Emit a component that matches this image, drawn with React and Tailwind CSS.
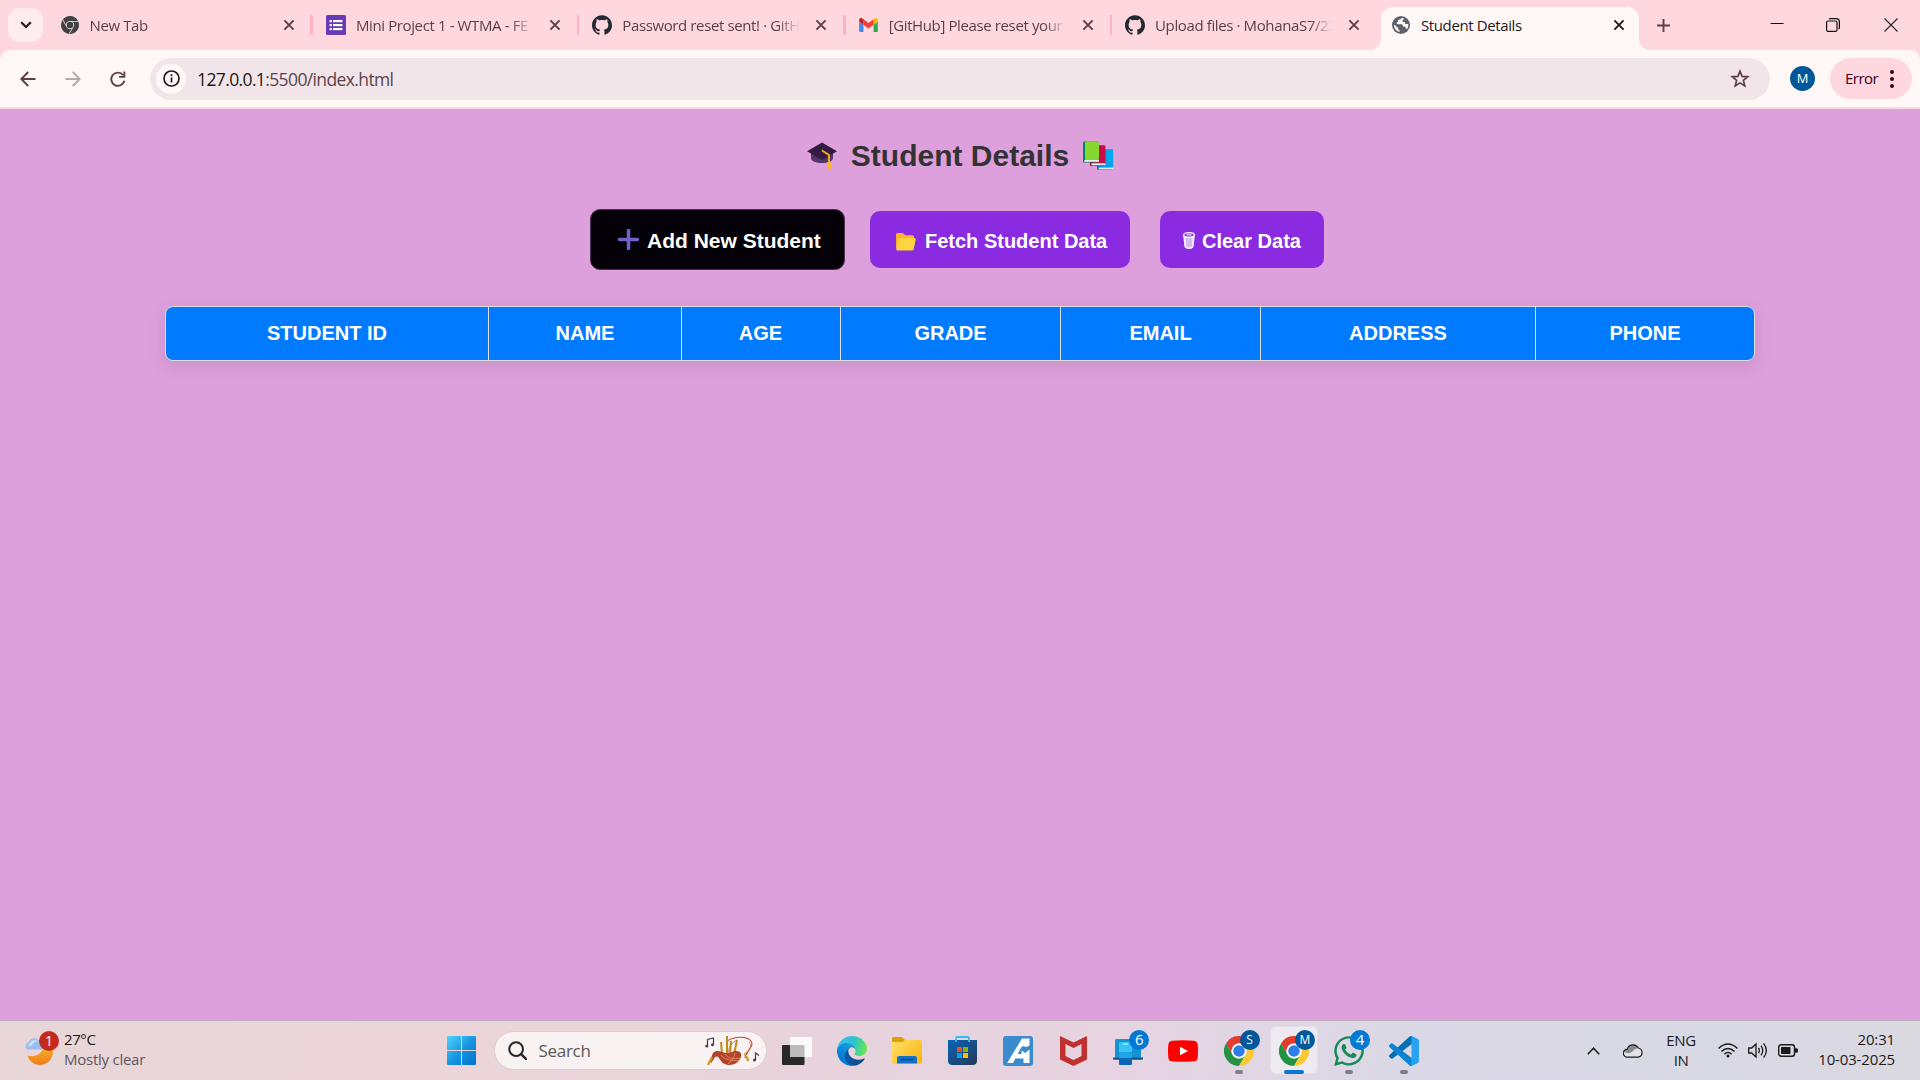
import React from "react";
import { SiGithub, SiGooglechrome } from "react-icons/si";
import { FaWhatsapp } from "react-icons/fa";

function CloseX({ className = "" }) {
  return (
    <svg viewBox="0 0 12 12" className={`size-3 shrink-0 ${className}`} fill="none" stroke="currentColor" strokeWidth="1.9">
      <path d="M1.4 1.4 10.6 10.6M10.6 1.4 1.4 10.6" />
    </svg>
  );
}

function FormsIcon() {
  return (
    <svg viewBox="0 0 20 20" className="size-5">
      <rect width="20" height="20" rx="1.5" fill="#673ab7" />
      <g fill="#fff">
        <rect x="3.6" y="5" width="2.2" height="2.2" />
        <rect x="7" y="5" width="9.4" height="2.2" />
        <rect x="3.6" y="9" width="2.2" height="2.2" />
        <rect x="7" y="9" width="9.4" height="2.2" />
        <rect x="3.6" y="13" width="2.2" height="2.2" />
        <rect x="7" y="13" width="9.4" height="2.2" />
      </g>
    </svg>
  );
}

function GmailIcon() {
  return (
    <svg viewBox="52 42 88 66" className="h-[14px] w-[19px]">
      <path fill="#4285f4" d="M58 108h14V74L52 59v43c0 3.32 2.69 6 6 6" />
      <path fill="#34a853" d="M120 108h14c3.32 0 6-2.69 6-6V59l-20 15" />
      <path fill="#fbbc04" d="M120 48v26l20-15v-8c0-7.42-8.47-11.65-14.4-7.2" />
      <path fill="#ea4335" d="M72 74V48l24 18 24-18v26L96 92" />
      <path fill="#c5221f" d="M52 51v8l20 15V48l-5.6-4.2c-5.94-4.45-14.4-.22-14.4 7.2" />
    </svg>
  );
}

function GlobeIcon() {
  return (
    <svg viewBox="0 0 18 18" className="size-[18px]">
      <circle cx="9" cy="9" r="9" fill="#5f6368" />
      <path fill="#fff8f7" d="M10.2 1.8c-.8.3-1.5 1-1.7 1.8H7.3c-.7 0-1.2.6-1.2 1.3v1.2H4.8v1.3c0 .5.4.8.9.8h3.8c.8 0 1.2.6 1.2 1.2v1.1h1.5c.9 0 1.4.8 1.5 1.6l1 1.2c1-1 1.6-2.5 1.6-4.1l-.1-1.1h-2.2c-.7 0-1.1-.4-1.1-1V5.9h-1.5c-.6 0-1-.4-1-1 0-1.2 1.5-1 1.5-2.2z" />
      <path fill="#fff8f7" d="M1.9 8.5 6.2 12v.8c0 .8.6 1.4 1.4 1.4v1.9A7.2 7.2 0 0 1 1.9 8.5z" />
    </svg>
  );
}

function Tab({ icon, title, last }) {
  return (
    <div className="flex h-full w-[266.4px] shrink-0 items-center">
      <div className="ml-[14px] flex w-5 items-center justify-center">{icon}</div>
      <div className="ml-[10px] w-[178px] overflow-hidden whitespace-nowrap text-[15px] leading-5 tracking-[-0.38px] text-[#5c3f44] [mask-image:linear-gradient(to_right,#000_155px,transparent_178px)]">
        {title}
      </div>
      <CloseX className="ml-[15px] text-[#5c3f44]" />
      {!last && <div className="ml-auto h-5 w-[2.5px] translate-x-px rounded-full bg-[#ffb1bf]" />}
    </div>
  );
}

function TabStrip() {
  return (
    <div className="flex h-[50px] items-center bg-[#ffd8df]">
      <div className="ml-2 flex h-[34px] w-[35px] shrink-0 items-center justify-center rounded-xl bg-[#ffecef]">
        <svg viewBox="0 0 12 8" className="h-2 w-3" fill="none" stroke="#24191b" strokeWidth="2.2">
          <path d="M1.2 1.2 6 6l4.8-4.8" />
        </svg>
      </div>
      <div className="ml-[2.5px] flex h-full">
        <Tab icon={<SiGooglechrome className="size-[18px] text-[#3f4346]" />} title="New Tab" />
        <Tab icon={<FormsIcon />} title="Mini Project 1 - WTMA - FE" />
        <Tab icon={<SiGithub className="size-5 text-[#24292f]" />} title="Password reset sent! · GitH" />
        <Tab icon={<GmailIcon />} title="[GitHub] Please reset your p" />
        <Tab icon={<SiGithub className="size-5 text-[#24292f]" />} title="Upload files · MohanaS7/23" last />
      </div>
      <div className="relative ml-[3.5px] flex h-[43px] w-[258px] shrink-0 items-center self-end rounded-t-xl bg-[#fff8f7]">
        <div className="absolute bottom-0 -left-3 size-3 bg-[radial-gradient(circle_at_0_0,transparent_12px,#fff8f7_12.5px)]" />
        <div className="absolute bottom-0 -right-3 size-3 bg-[radial-gradient(circle_at_100%_0,transparent_12px,#fff8f7_12.5px)]" />
        <div className="mb-[7px] ml-[11px] flex items-center">
          <GlobeIcon />
          <div className="ml-[11px] w-[192px] text-[15px] leading-5 tracking-[-0.38px] text-[#24191b]">Student Details</div>
          <CloseX className="text-[#24191b]" />
        </div>
      </div>
      <svg viewBox="0 0 13 13" className="ml-[18px] size-[13px]" fill="none" stroke="#5c3f44" strokeWidth="1.9">
        <path d="M6.5 0v13M0 6.5h13" />
      </svg>
      <svg viewBox="0 0 14 14" className="ml-[100px] size-[14px]" fill="none" stroke="#111">
        <path d="M.5 5.5h13" />
      </svg>
      <svg viewBox="0 0 14 14" className="ml-[42px] size-[14px]" fill="none" stroke="#111" strokeWidth="1.2">
        <rect x=".6" y="3" width="10.4" height="10.4" rx="1.5" />
        <path d="M3 1.2Q3.5.6 4.500.6h5.500q3.400 0 3.400 3.400v5.500q0 1-.8 1.500" />
      </svg>
      <svg viewBox="0 0 14 14" className="ml-[44px] size-[14px]" fill="none" stroke="#222" strokeWidth="1.1">
        <path d="m.5.5 13 13M13.500.5l-13 13" />
      </svg>
    </div>
  );
}

function Toolbar() {
  return (
    <div className="h-[59px] bg-[#ffd8df]">
      <div className="flex h-[59px] items-center rounded-t-[10px] border-b-2 border-[#f3dde0] bg-[#fff8f7]">
        <svg viewBox="0 0 16 16" className="ml-5 size-4" fill="none" stroke="#5c3f44" strokeWidth="1.9">
          <path d="M15.500 8H1.500M8.200 1 1.300 8l6.900 7" />
        </svg>
        <svg viewBox="0 0 16 16" className="ml-[29px] size-4" fill="none" stroke="#b8a6a8" strokeWidth="1.9">
          <path d="M.5 8h14M7.800 1l6.900 7-6.900 7" />
        </svg>
        <svg viewBox="0 0 16 16" className="ml-[29px] size-4" fill="none" stroke="#5c3f44" strokeWidth="1.9">
          <path d="M13.200 4.300A6.600 6.600 0 1 0 14.300 9.800" />
          <path d="M14.400.6v5.300H9.100" />
        </svg>
        <div className="ml-6 flex h-[42px] w-[1620px] items-center rounded-full bg-[#f2e5e9]">
          <div className="ml-[6px] flex size-[30px] items-center justify-center rounded-full bg-[#fff8f7]">
            <svg viewBox="0 0 17 17" className="size-[17px]" fill="none" stroke="#24191b" strokeWidth="1.7">
              <circle cx="8.500" cy="8.500" r="7.500" />
              <path d="M8.500 7.500v5M8.500 4.300v1.900" />
            </svg>
          </div>
          <div className="mt-px ml-[11px] text-[17.5px] leading-6 tracking-[-0.62px] text-[#5c4348]">
            <span className="text-[#1f1517]">127.0.0.1</span>:5500/index.html
          </div>
          <svg viewBox="0 0 20 20" className="mr-[20px] ml-auto size-5" fill="none" stroke="#5c3f44" strokeWidth="1.7">
            <path d="m10 2.200 2.100 5.200 5.600.4-4.300 3.600 1.400 5.500L10 13.900l-4.800 3 1.400-5.500-4.300-3.600 5.600-.4z" />
          </svg>
        </div>
        <div className="ml-5 flex size-[25px] items-center justify-center rounded-full bg-[#01579b] text-[13px] text-white">M</div>
        <div className="ml-[15px] flex h-[41px] w-[82px] items-center rounded-full bg-[#ffd8df] pl-[15px] text-[15px] text-[#3f0018]">
          <span className="w-[32px] tracking-[-0.5px]">Error</span>
          <svg viewBox="0 0 4 18" className="ml-[13px] h-[18px] w-1" fill="#3f0018">
            <circle cx="2" cy="2" r="2" />
            <circle cx="2" cy="9" r="2" />
            <circle cx="2" cy="16" r="2" />
          </svg>
        </div>
      </div>
    </div>
  );
}

function CapIcon() {
  return (
    <svg viewBox="0 0 30 28" className="h-7 w-[30px]">
      <path d="M4 10v6c0 3 5 5 11 5s11-2 11-5v-6z" fill="#533566" />
      <path d="M15 .5 30 9.200 15 18 0 9.200z" fill="#321b41" />
      <path d="m15 8.500 7 4.500v11" fill="none" stroke="#f9a825" strokeWidth="1.9" />
      <path d="M20.300 20h3.400l.4 7.500h-4.200z" fill="#ffb02e" />
    </svg>
  );
}

function BooksIcon() {
  return (
    <svg viewBox="0 0 30 30" className="size-[30px]">
      <rect x="14" y="8.500" width="16" height="20.500" rx="1.200" fill="#0074ba" />
      <rect x="16" y="8.500" width="14" height="18" rx="1" fill="#00a6ed" />
      <path d="M15.500 26.500H30v2H15.500z" fill="#e5e5ef" />
      <rect x="7" y="4.500" width="15" height="20.500" rx="1.200" fill="#990838" />
      <rect x="9" y="4.500" width="13.500" height="18" rx="1" fill="#ca0b4a" />
      <path d="M8.500 22.300h13.800v2H8.500z" fill="#f3eef8" />
      <rect x="0" y=".5" width="15.500" height="21" rx="1.200" fill="#008463" />
      <rect x="2" y=".5" width="14" height="18.500" rx="1" fill="#86d72f" />
      <path d="M1.500 19H16v1.800H1.500z" fill="#f3eef8" />
    </svg>
  );
}

const columns = [
  ["STUDENT ID", "w-[323px]"],
  ["NAME", "w-[193px]"],
  ["AGE", "w-[159px] pr-px"],
  ["GRADE", "w-[220px]"],
  ["EMAIL", "w-[200px]"],
  ["ADDRESS", "w-[275px]"],
  ["PHONE", "w-[218px]"],
];

function StudentPage() {
  return (
    <main className="flex h-[911px] flex-col items-center bg-[#dda0dd] font-['Liberation_Sans',Arial,sans-serif] font-bold">
      <h1 className="mt-[28px] flex h-[36px] items-center text-[30px] text-[#333]">
        <span className="mt-[2px]"><CapIcon /></span>
        <span className="mr-[14px] ml-[14px]">Student Details</span>
        <span className="mt-[2px]"><BooksIcon /></span>
      </h1>
      <div className="mt-[36px] mr-[6px] flex h-[61px] items-center text-[20px] text-white">
        <button className="flex h-[61px] w-[255px] items-center rounded-[10px] border border-[#4a3350] bg-[#040108] pl-[27px] text-[21px]">
          <svg viewBox="0 0 20 20" className="size-[21px]">
            <path d="M10 1.500v17M1.500 10h17" stroke="#7660c8" strokeWidth="3.400" strokeLinecap="round" />
          </svg>
          <span className="mt-[3px] ml-[8px] whitespace-nowrap">Add New Student</span>
        </button>
        <button className="ml-[25px] flex h-[57px] w-[260px] items-center rounded-[10px] bg-[#8a2be2] pl-[26px]">
          <svg viewBox="0 0 20 18" className="mt-[5px] h-[18px] w-5">
            <path d="M0 1.500Q0 0 1.500 0H6q1 0 1.500.6L9 2.300h7.500q1.500 0 1.500 1.500V15H0z" fill="#ffb02e" />
            <path d="M4.800 5h13.700q1.500 0 1.200 1.500l-2 9.500q-.3 1.500-1.800 1.500H1.500Q0 17.500.3 16L2.800 6.500Q3.200 5 4.800 5z" fill="#fcd53f" />
          </svg>
          <span className="mt-[3px] ml-[9px] whitespace-nowrap">Fetch Student Data</span>
        </button>
        <button className="ml-[30px] flex h-[57px] w-[164px] items-center rounded-[10px] bg-[#8a2be2] pl-[23px]">
          <svg viewBox="0 0 12 17" className="mt-px h-[17px] w-3" fill="none" stroke="#fff">
            <path d="M.8 4 2 15q.2 1.400 4 1.400t4-1.400l1.200-11z" fill="#e9dcf9" strokeWidth="1" />
            <path d="M4 6.200v8.500M6 6.200v9M8 6.200v8.500" stroke="#a868e8" strokeWidth=".6" />
            <ellipse cx="6" cy="2.900" rx="5.400" ry="2.300" fill="#8a2be2" strokeWidth="1.200" />
            <path d="M3.500 2.800h5" strokeWidth="1" />
          </svg>
          <span className="mt-[3px] ml-[7px] whitespace-nowrap">Clear Data</span>
        </button>
      </div>
      <div className="mt-[36px] flex h-[55px] w-[1590px] overflow-hidden rounded-[8px] border border-[#ddd] bg-[#007bff] text-[20px] text-white shadow-[0_5px_19px_rgba(0,0,0,0.1)]">
        {columns.map(([name, width], i) => (
          <div
            key={name}
            className={`flex shrink-0 items-center justify-center pb-px ${width} ${i < columns.length - 1 ? "border-r border-[#ddd]" : ""}`}
          >
            {name}
          </div>
        ))}
      </div>
    </main>
  );
}

function ChromeLogo() {
  return (
    <svg viewBox="0 0 48 48" className="size-[30px]">
      <path fill="#e33b2e" d="M24 12H44.800A24 24 0 0 0 3.200 12L13.600 30A12 12 0 0 1 24 12z" />
      <path fill="#229342" d="M3.200 12A24 24 0 0 0 24 48L34.400 30A12 12 0 0 1 13.600 30z" />
      <path fill="#fcc934" d="M44.800 12A24 24 0 0 1 24 48L34.400 30A12 12 0 0 0 24 12z" />
      <circle cx="24" cy="24" r="12" fill="#fff" />
      <circle cx="24" cy="24" r="9.300" fill="#2f7de9" />
    </svg>
  );
}

function EdgeLogo() {
  return (
    <svg viewBox="0 0 256 256" className="size-[30px]">
      <defs>
        <linearGradient id="edgeDeep" x1="60" y1="178" x2="237" y2="178" gradientUnits="userSpaceOnUse">
          <stop stopColor="#0c59a4" />
          <stop offset="1" stopColor="#114a8b" />
        </linearGradient>
        <linearGradient id="edgeMid" x1="150" y1="90" x2="40" y2="220" gradientUnits="userSpaceOnUse">
          <stop stopColor="#1b9de2" />
          <stop offset="1" stopColor="#0078d4" />
        </linearGradient>
        <linearGradient id="edgeTop" x1="20" y1="50" x2="250" y2="120" gradientUnits="userSpaceOnUse">
          <stop stopColor="#35c1f1" />
          <stop offset=".5" stopColor="#2fc3cc" />
          <stop offset="1" stopColor="#66eb4b" />
        </linearGradient>
      </defs>
      <path fill="url(#edgeDeep)" d="M231.070 190.540c-3.430 1.800-6.960 3.380-10.600 4.700a101.860 101.860 0 0 1-35.930 6.460c-47.350 0-88.600-32.570-88.600-74.360A31.480 31.480 0 0 1 112.370 100c-42.830 1.800-53.840 46.430-53.840 72.580 0 73.930 68.140 81.430 82.820 81.430 7.910 0 19.840-2.300 27-4.570l1.310-.44a128.340 128.340 0 0 0 66.600-52.800 4 4 0 0 0-5.200-5.660z" />
      <path fill="url(#edgeMid)" d="M105.730 241.420a79.200 79.200 0 0 1-22.740-21.340 80.720 80.720 0 0 1 29.380-120.080c3.120-1.470 8.450-4.130 15.540-4a32.350 32.350 0 0 1 25.690 13 31.880 31.880 0 0 1 6.360 18.660c0-.21 24.460-79.600-80-79.600-43.900 0-80 41.660-80 78.210a130.150 130.150 0 0 0 12.110 56A128 128 0 0 0 168.350 249.400a75.550 75.550 0 0 1-62.630-8z" />
      <path fill="url(#edgeTop)" d="M152.290 148.860c-.81 1.050-3.300 2.500-3.300 5.660 0 2.610 1.700 5.120 4.720 7.230 14.380 10 41.490 8.680 41.560 8.680a59.560 59.560 0 0 0 30.270-8.350A61.380 61.380 0 0 0 256 109.190c.26-22.410-8-37.310-11.340-43.910C223.460 23.840 177.720 0 128 0A128 128 0 0 0 0 126.200c.48-36.540 36.800-66.050 80-66.050 3.500 0 23.460.34 42 10.070 16.340 8.580 24.900 18.940 30.850 29.210 6.180 10.670 7.280 24.150 7.280 29.520 0 5.370-2.740 13.330-7.800 19.900z" />
    </svg>
  );
}

function VsCodeLogo() {
  return (
    <svg viewBox="0 0 100 100" className="size-[30px]">
      <path fill="#0070b3" d="M96.460 10.800L75.860.88c-2.380-1.150-5.230-.66-7.100 1.200L1.300 63.580c-1.820 1.650-1.810 4.510 0 6.160l5.510 5.010c1.480 1.350 3.720 1.450 5.330.23l81.240-61.630C96.100 11.280 100 13.230 100 16.640v-.24c0-2.400-1.370-4.570-3.540-5.600z" />
      <path fill="#0b84d3" d="M96.460 89.200l-20.600 9.920c-2.380 1.150-5.230.66-7.100-1.200L1.300 36.420c-1.820-1.650-1.810-4.510 0-6.160l5.510-5.010c1.480-1.350 3.720-1.450 5.330-.23l81.240 61.630c2.720 2.070 6.620.12 6.620-3.290v.24c0 2.400-1.370 4.570-3.540 5.600z" />
      <path fill="#27a3f2" d="M75.860 99.130c-2.390 1.140-5.240.66-7.110-1.210 2.310 2.300 6.250.67 6.250-2.590V4.670c0-3.260-3.940-4.890-6.250-2.590 1.870-1.870 4.720-2.360 7.110-1.210l20.600 9.910c2.160 1.040 3.540 3.230 3.540 5.630v67.180c0 2.400-1.380 4.590-3.540 5.630l-20.600 9.910z" />
    </svg>
  );
}

function WindowsLogo() {
  return (
    <svg viewBox="0 0 29 29" className="size-[29px]">
      <defs>
        <linearGradient id="win" x1="0" y1="0" x2="29" y2="29" gradientUnits="userSpaceOnUse">
          <stop stopColor="#4fd2fb" />
          <stop offset=".55" stopColor="#1591e0" />
          <stop offset="1" stopColor="#0074cf" />
        </linearGradient>
      </defs>
      <path fill="url(#win)" d="M1 0h13v14H0V1q0-1 1-1zM15 0h13q1 0 1 1v13H15zM0 15h14v14H1q-1 0-1-1zM15 15h14v13q0 1-1 1H15z" />
    </svg>
  );
}

function TaskViewIcon() {
  return (
    <svg viewBox="0 0 30 28" className="h-7 w-[30px]">
      <rect y="8" width="22.500" height="20" rx="1" fill="#292929" />
      <rect x="8" width="22" height="20" rx="1" fill="#fbfbfb" />
      <path d="M8 8h14.500v12H8z" fill="#bcbcbc" />
    </svg>
  );
}

function FolderIcon() {
  return (
    <svg viewBox="0 0 30 27" className="h-[27px] w-[30px]">
      <defs>
        <linearGradient id="fold" x1="0" y1="4" x2="24" y2="27" gradientUnits="userSpaceOnUse">
          <stop stopColor="#ffdf6b" />
          <stop offset="1" stopColor="#fdb813" />
        </linearGradient>
      </defs>
      <path fill="#e0a000" d="M0 1.500Q0 0 1.500 0H9q1 0 1.700.7L13 3v6H0z" />
      <path fill="url(#fold)" d="M0 5h9.500q1 0 1.700-.6L13 3h15.500Q30 3 30 4.500V26.500H0z" />
      <path fill="#1172c8" d="M5 21q0-2 2-2h16q2 0 2 2v5.500H5z" />
      <path d="M9 22.500h12" stroke="#0a4a87" strokeWidth="1.300" strokeLinecap="round" />
    </svg>
  );
}

function StoreIcon() {
  return (
    <svg viewBox="0 0 29 29" className="size-[29px]">
      <defs>
        <linearGradient id="store" x1="4" y1="4" x2="25" y2="29" gradientUnits="userSpaceOnUse">
          <stop stopColor="#0c62b0" />
          <stop offset="1" stopColor="#243a5e" />
        </linearGradient>
      </defs>
      <path fill="url(#store)" d="M0 4h29v20.500q0 4.500-4.500 4.500h-20Q0 29 0 24.500z" />
      <path d="M8 6V2.200Q8 1 9.200 1h10.600Q21 1 21 2.200V6" fill="none" stroke="#2fc0f2" strokeWidth="1.800" />
      <path fill="#f25022" d="M9 11h5v5H9z" />
      <path fill="#7fba00" d="M15 11h5v5h-5z" />
      <path fill="#00a4ef" d="M9 17h5v5H9z" />
      <path fill="#ffb900" d="M15 17h5v5h-5z" />
    </svg>
  );
}

function AiIcon() {
  return (
    <svg viewBox="0 0 30 30" className="size-[30px]">
      <rect width="30" height="30" rx="3" fill="#3b8ccc" />
      <path fill="#fff" d="M19 2.500h7.500v6.800q-2.500 2.500-5 1.300-2.300-.8-3.500 1.200l-3.300 6.200h3.600l.6-3.500 3.100 2.500 4.500-3.500V27h-6v-4.500h-8.200L10 27H4.200z" />
    </svg>
  );
}

function PhoneLinkIcon() {
  return (
    <svg viewBox="0 0 30 28" className="h-7 w-[30px]">
      <rect x="2" y="2" width="26" height="19" rx="1.500" fill="#1593cf" />
      <path d="M0 20.500h30v1.200q0 1-1 1H1q-1 0-1-1z" fill="#0b568f" />
      <rect x="6" y="5" width="13" height="23" rx="1.200" fill="#35c4f3" />
      <path d="M6 15h13v6H6z" fill="#1fa4e4" />
      <path d="M6 21h13v5.500q0 1.500-1.500 1.500h-10Q6 28 6 26.500z" fill="#0a66b7" />
      <path d="M10 7h5" stroke="#e3f7ff" strokeWidth="1" />
    </svg>
  );
}

function Bagpipes() {
  return (
    <svg viewBox="0 0 55 32" className="h-8 w-[55px]" fill="none">
      <path d="M2.500 11V4.500l6-1.500v6.500M50.500 25v-7l3.500 2.500" stroke="#4e3559" strokeWidth="1.200" />
      <g fill="#4e3559">
        <circle cx="1.800" cy="11" r="1.500" />
        <circle cx="7.500" cy="9.800" r="1.500" />
        <circle cx="49.500" cy="25" r="1.500" />
      </g>
      <path d="M22 6C30 1 42 1 46 6s-5 10-6 17" stroke="#b8463a" strokeWidth="1.100" />
      <path d="M32 5c-6 3-8 7-9 14M44 7c3 3 2 8-5 12" stroke="#cf7048" strokeWidth=".8" />
      <path d="M22 1v18M16 7l1 13M32 5l-3 15M26 6l-1 12" stroke="#c28a1c" strokeWidth="2" />
      <path d="M8 18c4-4 8-1 13 0s6-2 10-2c5 0 6 3 5 6-2 5-6 8-12 8s-8-4-10-7c-2-2-4-2-5 1l-3 4-1.500-1z" fill="#b5432a" />
      <path d="M16 20c4 6 12 5 18 6M20 19c4 5 9 5 15 4M30 18c-1 5-4 9-7 11" stroke="#e79a72" strokeWidth=".8" />
      <path d="m7 22-4 8M40 19l3.500 7" stroke="#cf9a21" strokeWidth="2.200" />
    </svg>
  );
}

function Slot({ children, badge, badgeClass = "bg-[#0078d4] text-[13px]", mark, active }) {
  return (
    <div className="relative flex h-[59px] w-[55.2px] shrink-0 items-center justify-center">
      {active && <div className="absolute top-[5px] left-[3.6px] h-12 w-12 rounded-[5px] border border-[#e4dfe6] bg-[#efe9f1]" />}
      <div className="relative flex size-[30px] items-center justify-center">
        {children}
        {badge && (
          <span className={`absolute -top-[6px] left-4 flex size-5 items-center justify-center rounded-full leading-none text-white ${badgeClass}`}>
            {badge}
          </span>
        )}
      </div>
      {mark && <div className={`absolute bottom-[6px] h-1 rounded-full ${active ? "w-5 bg-[#0a78d3]" : "w-2 bg-[#827e87]"}`} />}
    </div>
  );
}

function Taskbar() {
  return (
    <footer className="flex h-[60px] items-center border-t border-[#bfb0bd] bg-[linear-gradient(100deg,#e8d6d8_0%,#ecd5d8_22%,#e8d3dc_42%,#e7d3e1_58%,#dbd8e6_72%,#d9d8e5_90%,#dad9e0_100%)] text-[#1b1b1b]">
      <div className="flex w-[447px] shrink-0 items-center">
        <div className="relative -mt-[3px] ml-[25px] h-[36px] w-[34px]">
          <svg viewBox="0 0 34 36" className="h-9 w-[34px]">
            <defs>
              <linearGradient id="moon" x1="0" y1="16" x2="0" y2="34" gradientUnits="userSpaceOnUse">
                <stop stopColor="#f5b324" />
                <stop offset="1" stopColor="#f07a1c" />
              </linearGradient>
            </defs>
            <path fill="url(#moon)" d="M2.500 24.500Q14 28 20 15l8 3c1 9-5 16-13 16-6 0-11-4-12.500-9.500z" />
            <path fill="#9dbff0" d="M3 18.500a3.600 3.600 0 0 1 .5-7A6 6 0 0 1 14 9.500a5 5 0 0 1 5 9z" />
            <path fill="#c9def9" d="M3.500 15a3 3 0 0 1 1.500-3A5 5 0 0 1 13 10.500q-5 0-6 4z" />
          </svg>
          <span className="absolute top-0 right-0 flex size-5 items-center justify-center rounded-full bg-[#c42b1c] text-[14px] leading-none text-white">1</span>
        </div>
        <div className="-mt-[3px] ml-[5px] text-[15px] leading-[20px] tracking-[-0.25px]">
          <div className="tracking-[-0.4px]">27°C</div>
          <div className="text-[#5d5759]">Mostly clear</div>
        </div>
      </div>
      <WindowsLogo />
      <div className="mr-[3px] ml-[17.5px] flex h-[39px] w-[273px] shrink-0 items-center rounded-full border border-[#dccdd0] bg-[#f9f2f3]">
        <svg viewBox="0 0 18 18" className="ml-[13px] size-[19px]" fill="none" stroke="#2a2627" strokeWidth="1.900">
          <circle cx="7.700" cy="7.700" r="6.500" />
          <path d="m12.400 12.400 4.800 4.800" strokeLinecap="round" strokeWidth="2.300" />
        </svg>
        <span className="ml-3 text-[17px] tracking-[-0.3px] text-[#5d5759]">Search</span>
        <div className="mr-[6px] ml-auto"><Bagpipes /></div>
      </div>
      <Slot><TaskViewIcon /></Slot>
      <Slot><EdgeLogo /></Slot>
      <Slot><FolderIcon /></Slot>
      <Slot><StoreIcon /></Slot>
      <Slot><AiIcon /></Slot>
      <Slot>
        <svg viewBox="0 0 27 30" className="h-[30px] w-[27px]">
          <path fill="#c0302e" d="m0 0 13.500 6.500L27 0v23.500L13.500 30 0 23.500zM5.500 8v12l8 4 8-4V8l-8 4z" />
        </svg>
      </Slot>
      <Slot badge="6" badgeClass="bg-[#0078d4] text-[15px]"><PhoneLinkIcon /></Slot>
      <Slot>
        <svg viewBox="0 0 30 22" className="h-[22px] w-[30px]">
          <path fill="#f00" d="M4 .7Q15-.4 26 .7q3.300.4 3.700 3.800.6 6.500 0 13-.4 3.400-3.700 3.800-11 1.100-22 0Q.7 20.900.3 17.500q-.6-6.500 0-13Q.7 1.100 4 .7z" />
          <path fill="#fff" d="m12 6.800 8 4.200-8 4.200z" />
        </svg>
      </Slot>
      <Slot badge="S" badgeClass="bg-[#01579b] text-[12px] text-[#b9d5ec]" mark><ChromeLogo /></Slot>
      <Slot badge="M" badgeClass="bg-[#01579b] text-[12px] text-[#b9d5ec]" mark active><ChromeLogo /></Slot>
      <Slot badge="4" badgeClass="bg-[#0078d4] text-[15px]" mark>
        <FaWhatsapp className="size-[34px] shrink-0 text-[#168a54]" />
      </Slot>
      <Slot mark><VsCodeLogo /></Slot>
      <div className="mr-[25px] ml-auto flex items-center">
        <svg viewBox="0 0 13 8" className="h-2 w-[13px]" fill="none" stroke="#1b1b1b" strokeWidth="1.500">
          <path d="m.8 7.200 5.700-6 5.700 6" />
        </svg>
        <svg viewBox="0 0 20 15" className="ml-[23px] h-[15px] w-5">
          <path d="M4.500 14.200a4 4 0 0 1-.3-8A6 6 0 0 1 15.300 5a4.700 4.700 0 0 1 0 9.200z" fill="#e4e3e6" />
          <path d="M1.200 9a4 4 0 0 1 3-2.800A6 6 0 0 1 15 5q-3.500.5-5.500 3.500-3.500 3-8.300.5z" fill="#8d8b8f" />
          <path d="M4.500 14.200a4 4 0 0 1-.3-8A6 6 0 0 1 15.300 5a4.700 4.700 0 0 1 0 9.200z" fill="none" stroke="#1b1b1b" strokeWidth="1.200" />
        </svg>
        <div className="-mt-[2px] ml-[22px] w-[32px] text-center text-[15px] leading-[20px] tracking-[-0.4px]">
          <div>ENG</div>
          <div>IN</div>
        </div>
        <svg viewBox="0 0 20 15" className="ml-[21px] h-[15px] w-5" fill="none" stroke="#1b1b1b" strokeWidth="1.400">
          <path d="M.6 5.500Q10-3.300 19.400 5.500M3.400 8.500q6.600-6 13.200 0M6.200 11.200q3.800-3.400 7.600 0" />
          <circle cx="10" cy="13" r="1.500" fill="#1b1b1b" stroke="none" />
        </svg>
        <svg viewBox="0 0 20 17" className="ml-[10px] h-[17px] w-5" fill="none" stroke="#1b1b1b" strokeWidth="1.300">
          <path d="M.7 6v5h3l4.300 4V2L3.700 6zM10.500 5.800q1.800 2.700 0 5.400M13 3.600q3.500 4.900 0 9.800M15.600 1.300q5.500 7.200 0 14.400" />
        </svg>
        <svg viewBox="0 0 20 13" className="ml-[10px] h-[13px] w-5">
          <rect x=".7" y=".7" width="15.800" height="11.600" rx="2.500" fill="none" stroke="#1b1b1b" strokeWidth="1.400" />
          <rect x="3" y="3" width="9.500" height="7" rx=".8" fill="#1b1b1b" />
          <path d="M17 4.200h1.500q1.500 0 1.500 1.500v1.600q0 1.500-1.500 1.500H17z" fill="#1b1b1b" />
        </svg>
        <div className="-mt-[3px] ml-[18px] w-[79px] text-right text-[15px] leading-[20px] tracking-[-0.15px] whitespace-nowrap">
          <div>20:31</div>
          <div>10-03-2025</div>
        </div>
      </div>
    </footer>
  );
}

export default function App() {
  return (
    <div className="h-[1080px] w-[1920px] overflow-hidden font-['Open_Sans','Noto_Sans',sans-serif]">
      <TabStrip />
      <Toolbar />
      <StudentPage />
      <Taskbar />
    </div>
  );
}
